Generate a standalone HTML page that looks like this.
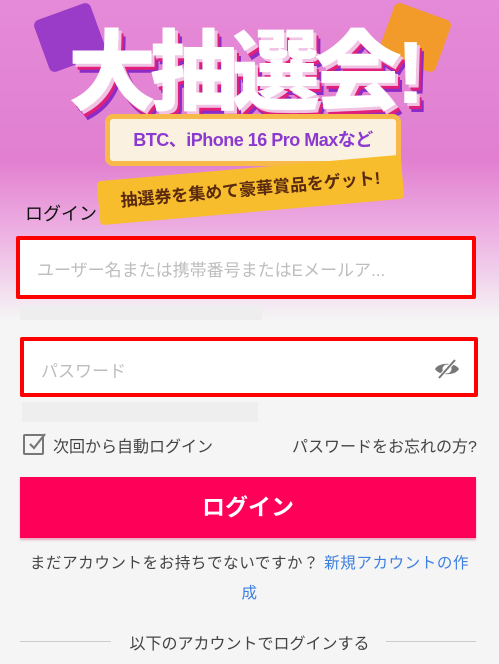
<!DOCTYPE html>
<html><head><meta charset="utf-8"><style>
*{margin:0;padding:0;box-sizing:border-box}
body{width:499px;height:664px;overflow:hidden;background:#f5f5f5;font-family:"Liberation Sans","Noto Sans CJK JP",sans-serif;position:relative}
.ban{position:absolute;left:0;top:0;width:499px;height:320px;background:linear-gradient(180deg,#e48ad8 0%,#e27fd0 50%,#eeb6e4 75%,#f5f5f5 100%)}
.abs{position:absolute}
.big{left:68px;top:18px;font-size:88px;font-weight:900;color:#fff;letter-spacing:-6px;text-shadow:3px 3px 0 #f0c3e4,5px 6px 0 #e0207a,7px 9px 0 #8a2cc8;white-space:nowrap;line-height:110px}
.plq{left:105px;top:114px;width:296px;height:52px;background:#fbf1e0;border:5px solid #f6b94a;border-radius:8px;color:#8b3ad0;font-weight:bold;font-size:18px;text-align:center;line-height:42px;white-space:nowrap;letter-spacing:-0.5px}
.rib{left:98px;top:168px;width:305px;height:44px;background:#f7bd2c;transform:rotate(-5deg);color:#5a2a10;font-weight:bold;font-size:17px;text-align:center;line-height:44px;border-radius:4px}
.box{position:absolute;background:#fff;border:4px solid #f00;border-radius:2px;color:#bdbdbd;font-size:17px;padding-left:17px}
</style></head><body>
<div class="ban"></div>
<div class="abs" style="left:40px;top:10px;width:60px;height:55px;background:#9a3cc8;transform:rotate(-20deg);border-radius:6px"></div>
<div class="abs" style="left:385px;top:10px;width:60px;height:55px;background:#f29a2a;transform:rotate(20deg);border-radius:6px"></div>
<div class="abs big">大抽選会!</div>
<div class="abs plq">BTC、iPhone 16 Pro Maxなど</div>
<div class="abs rib">抽選券を集めて豪華賞品をゲット!</div>
<div class="abs" style="left:25px;top:200px;font-size:18px;color:#111">ログイン</div>
<div class="box" style="left:16px;top:236px;width:460px;height:63px;line-height:62px">ユーザー名または携帯番号またはEメールア...</div>
<div class="abs" style="left:20px;top:306px;width:242px;height:14px;background:#eeeeee"></div>
<div class="box" style="left:20px;top:337px;width:458px;height:60px;line-height:62px">パスワード
<svg class="abs" style="right:14px;top:17px" width="26" height="22" viewBox="0 0 26 22"><path d="M1 11C5 4 21 4 25 11C21 18 5 18 1 11Z" fill="#777"/><circle cx="13" cy="11" r="4.5" fill="#fff"/><path d="M5 20L21 2" stroke="#fff" stroke-width="4"/><path d="M5 20L21 2" stroke="#777" stroke-width="2"/></svg></div>
<div class="abs" style="left:22px;top:402px;width:236px;height:20px;background:#eeeeee"></div>
<div class="abs" style="left:23px;top:434px;width:21px;height:21px;border:2px solid #777;border-radius:2px"></div>
<svg class="abs" style="left:24px;top:430px" width="24" height="24"><path d="M6 14L10 18L21 4" stroke="#777" stroke-width="2.2" fill="none"/></svg>
<div class="abs" style="left:53px;top:433px;font-size:16px;color:#444">次回から自動ログイン</div>
<div class="abs" style="left:292px;top:433px;font-size:16px;color:#444">パスワードをお忘れの方?</div>
<div class="abs" style="left:20px;top:477px;width:456px;height:61px;background:#ff0059;color:#fff;font-size:23px;font-weight:bold;text-align:center;line-height:61px;box-shadow:0 2px 2px rgba(200,0,60,.3)">ログイン</div>
<div class="abs" style="left:24px;top:549px;width:451px;text-align:center;font-size:15.5px;color:#444;line-height:30px;letter-spacing:0.6px">まだアカウントをお持ちでないですか？ <span style="color:#3c7fe0">新規アカウントの作成</span></div>
<div class="abs" style="left:20px;top:641px;width:91px;height:1px;background:#ccc"></div>
<div class="abs" style="left:386px;top:641px;width:90px;height:1px;background:#ccc"></div>
<div class="abs" style="left:0;top:630px;width:499px;text-align:center;font-size:16px;color:#444">以下のアカウントでログインする</div>
</body></html>
